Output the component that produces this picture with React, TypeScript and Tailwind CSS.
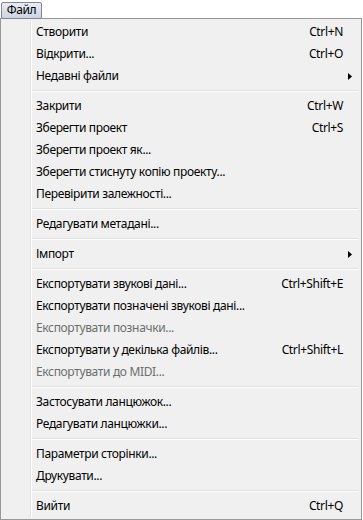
import React from 'react';

type Item =
  | { kind: 'item'; label: string; shortcut?: string; submenu?: boolean; disabled?: boolean }
  | { kind: 'sep' };

const items: Item[] = [
  { kind: 'item', label: 'Створити', shortcut: 'Ctrl+N' },
  { kind: 'item', label: 'Відкрити...', shortcut: 'Ctrl+O' },
  { kind: 'item', label: 'Недавні файли', submenu: true },
  { kind: 'sep' },
  { kind: 'item', label: 'Закрити', shortcut: 'Ctrl+W' },
  { kind: 'item', label: 'Зберегти проект', shortcut: 'Ctrl+S' },
  { kind: 'item', label: 'Зберегти проект як...' },
  { kind: 'item', label: 'Зберегти стиснуту копію проекту...' },
  { kind: 'item', label: 'Перевірити залежності...' },
  { kind: 'sep' },
  { kind: 'item', label: 'Редагувати метадані...' },
  { kind: 'sep' },
  { kind: 'item', label: 'Імпорт', submenu: true },
  { kind: 'sep' },
  { kind: 'item', label: 'Експортувати звукові дані...', shortcut: 'Ctrl+Shift+E' },
  { kind: 'item', label: 'Експортувати позначені звукові дані...' },
  { kind: 'item', label: 'Експортувати позначки...', disabled: true },
  { kind: 'item', label: 'Експортувати у декілька файлів...', shortcut: 'Ctrl+Shift+L' },
  { kind: 'item', label: 'Експортувати до MIDI...', disabled: true },
  { kind: 'sep' },
  { kind: 'item', label: 'Застосувати ланцюжок...' },
  { kind: 'item', label: 'Редагувати ланцюжки...' },
  { kind: 'sep' },
  { kind: 'item', label: 'Параметри сторінки...' },
  { kind: 'item', label: 'Друкувати...' },
  { kind: 'sep' },
  { kind: 'item', label: 'Вийти', shortcut: 'Ctrl+Q' },
];

function SubmenuArrow() {
  return (
    <svg width="4" height="7" viewBox="0 0 4 7" className="block">
      <path d="M0 0 L4 3.5 L0 7 Z" fill="#000" />
    </svg>
  );
}

export default function App() {
  return (
    <div
      className="w-[363px] h-[520px] bg-white text-[12px] tracking-[-0.35px] text-black"
      style={{ fontFamily: '"Noto Sans", "DejaVu Sans", sans-serif' }}
    >
      <div className="h-[18px] pt-px pl-px">
        <div className="inline-flex h-[17px] w-[41px] items-center justify-center rounded-[2px] border border-[#7f8794] bg-gradient-to-b from-[#e9ecf2] to-[#cdd4e1] leading-none">
          Файл
        </div>
      </div>
      <div className="flex w-[362px] border border-[#979797] bg-[#f0f0f0] py-[2px]">
        <div className="w-[29px] shrink-0" />
        <div className="w-px shrink-0 bg-[#e2e3e3]" />
        <div className="w-px shrink-0 bg-white" />
        <div className="flex flex-1 flex-col">
          {items.map((it, i) =>
            it.kind === 'sep' ? (
              <div key={i} className="flex h-[8px] flex-col justify-center pr-[2px]">
                <div className="h-px bg-[#e0e0e0]" />
                <div className="h-px bg-white" />
              </div>
            ) : (
              <div
                key={i}
                className={`flex h-[22px] items-center pl-[4px] ${
                  it.disabled ? 'text-[#6d6d6d]' : 'text-black'
                }`}
              >
                <span className="flex-1 whitespace-nowrap">{it.label}</span>
                {it.shortcut && <span className="whitespace-nowrap">{it.shortcut}</span>}
                <span className="flex w-[18px] justify-start pl-[5px]">
                  {it.submenu && <SubmenuArrow />}
                </span>
              </div>
            ),
          )}
        </div>
      </div>
    </div>
  );
}
